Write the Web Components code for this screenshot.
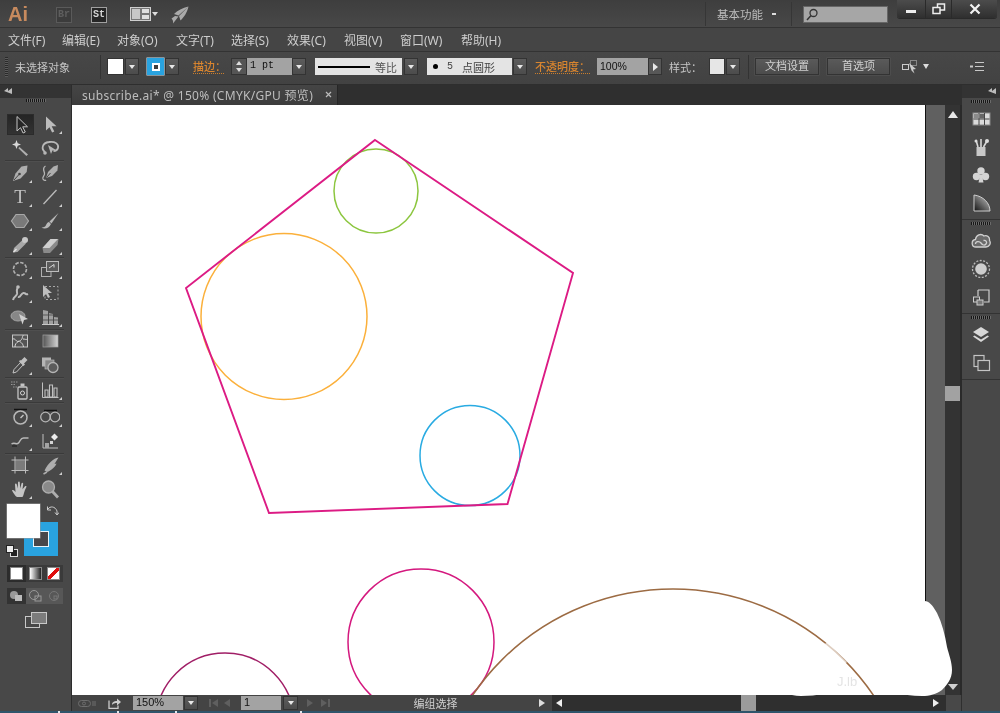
<!DOCTYPE html>
<html lang="zh">
<head>
<meta charset="utf-8">
<title>subscribe.ai</title>
<style>
  html, body { margin: 0; height: 713px; overflow: hidden; background: #444; }
  body {
    display: flex;
    flex-direction: column;
    font-family: "Noto Sans", "Noto Sans CJK SC", sans-serif;
    color: #c8c8c8;
    filter: blur(.45px);
  }
</style>
</head>
<body>
<ai-title-bar></ai-title-bar>
<ai-menu-bar></ai-menu-bar>
<ai-control-bar></ai-control-bar>
<ai-workspace>
  <ai-tool-panel></ai-tool-panel>
  <ai-document></ai-document>
  <ai-dock></ai-dock>
</ai-workspace>
<ai-bottom-strip></ai-bottom-strip>

<script>
// Shared base: every element renders its template into an open shadow root
class AiElement extends HTMLElement {
  constructor() {
    super();
    this.attachShadow({ mode: "open" });
    this.shadowRoot.innerHTML = this.template;
  }
}

const ICONS = {
  select: `<path d="M6 1.500v14.500l3.500-3.300 2.600 5.300 2.200-1-2.600-5.200h4.800z" fill="#262626" stroke="#c4c4c4"/>`,
  direct: `<path d="M6 2.500v14l3.500-3.300 2.600 5.300 2.200-1-2.600-5.200h4.800z" fill="#bcbcbc"/>`,
  wand: `<path d="M9.500 9l8.500 7.500-1.600 1.600L8.400 10.200z" fill="#b0b0b0"/><path d="M6.500 2l1.200 3.300 3.300 1.200-3.300 1.200-1.200 3.300-1.200-3.300L2 6.500l3.300-1.200z" fill="#d8d8d8"/>`,
  lasso: `<path d="M5 14C1 11 2 5 9 4c6-1 10 2 9 6-.6 2.500-3 3-4.500 3" fill="none" stroke="#b8b8b8" stroke-width="1.800"/><path d="M8 7l8 5-3.500.6L11 16z" fill="#b5b5b5"/><circle cx="5" cy="15" r="1.800" fill="#b5b5b5"/>`,
  pen: `<path d="M17.500 2.500l-.8 6.500-6.200 6.500L3 18l2.500-7.500 6-7z" fill="#aeaeae"/><path d="M4 17l5-5.500" stroke="#444"/><circle cx="9.500" cy="11" r="1.300" fill="#444"/>`,
  curve: `<path d="M18 2l-.6 5.500-5.400 5.500-6 2 2-6 5.500-5.500z" fill="#aeaeae"/><path d="M6.500 14.500l4-4.500" stroke="#444"/><path d="M5.500 3C2 5 4 8 4.500 10c.6 3-2.500 3.500-1.500 6 .5 1 2 2 3 1" fill="none" stroke="#b5b5b5" stroke-width="1.300"/>`,
  line: `<path d="M3.500 17L16.500 3" stroke="#bcbcbc" stroke-width="1.300"/>`,
  hexagon: `<path d="M6 3.500h8l4.500 6.500-4.500 6.500H6L1.500 10z" fill="#7a7a7a" stroke="#a8a8a8" stroke-width="1.200"/>`,
  brush: `<path d="M18.500 2L9.500 10.500l2 2z" fill="#b8b8b8"/><path d="M9 11c-2.500.5-2.500 3-4 4.500-1 .8-2.500 1-3.500 1.200 3 1.500 7.500 1 9.500-3.700z" fill="#b8b8b8"/>`,
  pencil: `<path d="M3 17.500l1-4.500 8.500-8 3.500 3.500-8.500 8.500z" fill="#a8a8a8"/><circle cx="15" cy="5" r="3" fill="#c8c8c8"/><path d="M3.500 17l3-3" stroke="#e4e4e4" stroke-width="1.500"/>`,
  eraser: `<path d="M2.500 13l8-9h8l-1 6-7.500 8H3.500z" fill="#8a8a8a"/><path d="M2.500 13h7l8.500-9h-7.500z" fill="#cfcfcf"/>`,
  rotate: `<circle cx="10" cy="10" r="6.500" fill="none" stroke="#b0b0b0" stroke-width="1.600" stroke-dasharray="3.500 1.500"/>`,
  scale: `<rect x="1.500" y="8.500" width="9.500" height="9" fill="none" stroke="#b0b0b0"/><rect x="6.500" y="2.500" width="12" height="10" fill="#5b5b5b" stroke="#bcbcbc"/><path d="M9 9l5-3.500M14 5.500v3" stroke="#d8d8d8"/>`,
  warp: `<path d="M3 17c1-4 3-3 4-6 .5-2-1-3 .5-6M8 14c3 1 3-5 6-4 2 .5 2 2 4 1" fill="none" stroke="#bcbcbc" stroke-width="2"/><circle cx="8" cy="4" r="1.800" fill="#bcbcbc"/>`,
  transform: `<rect x="5" y="3.500" width="13" height="13" fill="none" stroke="#a8a8a8" stroke-dasharray="2 2"/><path d="M3 2v12l3-3 2 4 2-1-2-4h4z" fill="#bebebe"/>`,
  builder: `<ellipse cx="8" cy="9" rx="7" ry="5" fill="#878787" stroke="#a4a4a4"/><path d="M9 7l9 5-4 1-1.500 4.500z" fill="#d0d0d0"/>`,
  perspective: `<path d="M3 3l5 1v13H3zM9 6l4 1v10H9zM14 10l4 .5V17h-4z" fill="#a0a0a0"/><path d="M2 17.500h17" stroke="#c8c8c8"/><path d="M3 8h15M3 13h15" stroke="#444" stroke-width=".8"/>`,
  mesh: `<rect x="2.500" y="4" width="15" height="12" fill="#555" stroke="#c4c4c4"/><path d="M2.500 8c4-1 3 4 7 2s2-4 4-6M9.500 10c1 2 3 1 4 6M5 16c0-3 1-4 4-6M13 8c2 0 3 1 4.500 0" fill="none" stroke="#d8d8d8"/>`,
  gradient: `<defs><linearGradient id="g"><stop offset="0" stop-color="#555"/><stop offset="1" stop-color="#d4d4d4"/></linearGradient></defs><rect x="3" y="4" width="15" height="12" fill="url(#g)" stroke="#a4a4a4" stroke-width=".7"/>`,
  dropper: `<path d="M3 18l1-3.500 7.500-8 2.500 2.500-7.500 8z" fill="none" stroke="#c4c4c4"/><path d="M11 5.500l3.500-3.500 3 3-3.500 3.500 1 1-1.500 1.500-4.500-4.500L10 5z" fill="#c0c0c0"/>`,
  blend: `<rect x="2" y="2.500" width="9" height="9" fill="#b5b5b5"/><rect x="5" y="5" width="9" height="9" fill="#868686" stroke="#b5b5b5" stroke-width=".7"/><circle cx="13" cy="12.500" r="5" fill="#5c5c5c" stroke="#b5b5b5" stroke-width="1.300"/>`,
  sprayer: `<rect x="8" y="7" width="9" height="12" rx="1" fill="none" stroke="#c4c4c4" stroke-width="1.300"/><rect x="10.500" y="3.500" width="4" height="3" fill="#c4c4c4"/><circle cx="12.500" cy="13" r="2" fill="none" stroke="#d4d4d4"/><path d="M1 2h7M1 4.500h5M3 7h4" stroke="#949494" stroke-dasharray="1.500 1"/>`,
  graph: `<path d="M2.500 2.500v15h16" fill="none" stroke="#c0c0c0"/><path d="M5 10h3v7H5zM9.500 5h3v12h-3zM14 8h3v9h-3z" fill="none" stroke="#c0c0c0" stroke-width="1.100"/>`,
  timer: `<path d="M4 2.500h13" stroke="#111" stroke-width="1.500"/><circle cx="10.500" cy="10.500" r="6.500" fill="none" stroke="#b8b8b8" stroke-width="1.500"/><path d="M10.500 11l3-3" stroke="#c4c4c4" stroke-width="1.500"/>`,
  glasses: `<path d="M4 3.500h13" stroke="#111" stroke-width="1.500"/><circle cx="5.500" cy="10" r="4.800" fill="none" stroke="#b5b5b5" stroke-width="1.300"/><circle cx="15" cy="10" r="4.800" fill="none" stroke="#b5b5b5" stroke-width="1.300"/>`,
  wave: `<path d="M1.500 13c3-2 5 1 7-1s2-6 6-5c2 .3 3 0 4 0" fill="none" stroke="#b8b8b8" stroke-width="1.500"/><path d="M2 15h5" stroke="#222" stroke-width="1.200"/>`,
  chart: `<path d="M3 3v14h15" fill="none" stroke="#c0c0c0"/><rect x="5" y="12" width="4" height="5" fill="#a4a4a4"/><rect x="10" y="10" width="3" height="3" fill="#d4d4d4"/><path d="M14.500 2.500l3.500 3.500-3.500 3.500L11 6z" fill="#ececec"/>`,
  artboard: `<rect x="5.500" y="5.500" width="9.500" height="9.500" fill="#7b7b7b"/><path d="M1.500 5h17M1.500 15.500h17M5 1.500v17M15.500 1.500v17" stroke="#bcbcbc"/>`,
  knife: `<path d="M18.500 2.500c-5 1-10 5-14 13l2.500 1.500c4-1 9-6 9.500-8.500l-2 .5z" fill="#aeaeae"/><path d="M7 17l-3.500 2" stroke="#aeaeae" stroke-width="1.500"/>`,
  hand: `<path d="M7 18c-2-1-3.500-4-5-6.500 1-1 2.200-.2 3.500 1.500L5 5.500c0-1.200 1.500-1.200 1.800 0l1 4L8 3.500c.2-1.200 1.700-1.200 1.800 0l.4 6L11.500 4.500c.4-1 1.700-.8 1.700.3l-.7 5.500 2.500-3c.8-.8 1.800-.1 1.400.8-1 2-2 4-2.400 6-.3 1.500-.8 2.900-1.500 3.900z" fill="#c4c4c4"/>`,
  zoom: `<circle cx="8.500" cy="8" r="6" fill="#8a8a8a" stroke="#aeaeae" stroke-width="1.300"/><path d="M12.500 12.500l5.500 6" stroke="#aeaeae" stroke-width="2.800"/>`,
  swatches: `<rect x="2" y="4" width="17" height="12" fill="#dadada" stroke="#888"/><path d="M2.500 10h16M8 4v12M13.500 4v12" stroke="#444"/><rect x="3" y="5" width="4.500" height="4.500" fill="#8a8a8a"/><rect x="8.500" y="5" width="4.500" height="4.500" fill="#666"/>`,
  brushes: `<rect x="5.500" y="10" width="9" height="9" fill="#c8c8c8"/><path d="M7 10L5 3M10 10V2M12.500 10l3.500-6" stroke="#d8d8d8" stroke-width="1.600"/><circle cx="16" cy="4" r="2" fill="#ddd"/><circle cx="5" cy="4" r="1.500" fill="#ddd"/>`,
  club: `<circle cx="10" cy="6" r="3.700" fill="#d4d4d4"/><circle cx="5.500" cy="11.500" r="3.700" fill="#d4d4d4"/><circle cx="14.500" cy="11.500" r="3.700" fill="#d4d4d4"/><path d="M9 10h2l1.500 7.500h-5z" fill="#d4d4d4"/>`,
  quarter: `<defs><linearGradient id="q" x1="0" y1="1" x2="1" y2="0"><stop offset="0" stop-color="#111"/><stop offset="1" stop-color="#ccc"/></linearGradient></defs><path d="M3 2v16h16C19 10 12 3 3 2z" fill="url(#q)" stroke="#ccc"/>`,
  cloud: `<path d="M5 16c-5 0-5-7-.5-7.500C5 4 10 2 13 5c3-1 6 1 5.500 4.500 2 3-.5 6.500-3.500 6.500z" fill="#6a6a6a" stroke="#d0d0d0" stroke-width="1.300"/><path d="M4.500 13c0-3 4-3 5.500-1s3.500 3 5 1 0-4-2.500-3.500" fill="none" stroke="#d0d0d0" stroke-width="1.300"/>`,
  sun: `<circle cx="10" cy="10" r="5.800" fill="#cdcdcd"/><circle cx="10" cy="10" r="8.500" fill="none" stroke="#bbb" stroke-width="1.300" stroke-dasharray="2 1.500"/>`,
  boards: `<path d="M7 3h11v12h-5" fill="none" stroke="#cfcfcf" stroke-width="1.200"/><path d="M7 3v6" stroke="#cfcfcf" stroke-width="1.200"/><rect x="2.500" y="10" width="6" height="5" fill="none" stroke="#cfcfcf"/><rect x="6" y="13" width="6" height="5" fill="#777" stroke="#cfcfcf"/>`,
  layers: `<path d="M10 2l8 5-8 5-8-5z" fill="#d8d8d8"/><path d="M3.500 10.500L10 14.500l6.500-4 1.500 1-8 5.500-8-5.500z" fill="#d8d8d8"/>`,
  overlap: `<rect x="3" y="2.500" width="10" height="11" fill="none" stroke="#c4c4c4" stroke-width="1.200"/><rect x="7" y="7.500" width="11.500" height="10" fill="#4a4a4a" stroke="#c4c4c4" stroke-width="1.200"/>`
};

// One svg icon looked up by name
class AiIcon extends AiElement {
  get template() {
    return `<style>:host { display: block; width: 20px; height: 20px; flex: none; } svg { display: block; }</style><svg width="20" height="20" viewBox="0 0 20 20"></svg>`;
  }
  connectedCallback() {
    this.shadowRoot.querySelector("svg").innerHTML = ICONS[this.getAttribute("name")] || "";
  }
}

// Tool button: icon, selected state and flyout corner
class AiTool extends AiElement {
  get template() {
    return `<style>
      :host { display: flex; position: relative; align-items: center; justify-content: center; height: 24px; }
      :host([selected]) { background: linear-gradient(#242424, #333); box-shadow: inset 0 0 0 1px #2b2b2b; margin: 2px 1px 1px 2px; }
      :host([flyout])::after {
        content: ""; position: absolute; right: 3px; bottom: 2px;
        border-left: 3px solid transparent; border-bottom: 3px solid #cfcfcf;
      }
      .t { font: 19px/20px "Liberation Serif", serif; color: #c0c0c0; }
    </style><slot></slot>`;
  }
  connectedCallback() {
    const name = this.getAttribute("icon");
    if (name) {
      const icon = document.createElement("ai-icon");
      icon.setAttribute("name", name);
      this.shadowRoot.appendChild(icon);
    } else {
      this.shadowRoot.innerHTML += `<span class="t">T</span>`;
    }
  }
}

// Small dropdown button with a white triangle
class AiDrop extends AiElement {
  get template() {
    return `<style>
      :host { display: flex; flex: none; align-items: center; justify-content: center; box-sizing: border-box;
        width: var(--w, 14px); height: 17px; background: linear-gradient(#5c5c5c, #4c4c4c); border: 1px solid #333; }
      i { border-left: 3px solid transparent; border-right: 3px solid transparent; border-top: 4px solid #e8e8e8; }
    </style><i></i>`;
  }
}

// Grey numeric field
class AiField extends AiElement {
  get template() {
    return `<style>
      :host { display: block; flex: none; box-sizing: border-box; height: 17px; padding: 0 3px;
        background: #a3a3a3; color: #111; font: 10.500px/16px "Liberation Sans", sans-serif; overflow: hidden; white-space: nowrap; }
    </style><slot></slot>`;
  }
}

class AiTitleBar extends AiElement {
  get template() {
    return `<style>
      :host { display: flex; flex: none; align-items: center; height: 28px; box-sizing: border-box;
        background: linear-gradient(#3e3e3e, #484848); border-bottom: 1px solid #333; position: relative; }
      .logo { margin-left: 8px; width: 22px; font: bold 20px/28px "Liberation Sans", sans-serif; color: #c78a5e; }
      .app { flex: none; box-sizing: border-box; width: 16px; height: 16px; margin-top: 2px; text-align: center;
        font: bold 10px/14px "Liberation Mono", monospace; }
      .br { margin-left: 26px; border: 1px solid #5a5a5a; color: #5e5e5e; background: #3c3c3c; }
      .st { margin-left: 19px; border: 1px solid #a0a0a0; color: #d5d5d5; background: #262626; }
      .layout { margin-left: 23px; flex: none; }
      .rocket { margin-left: 13px; flex: none; margin-top: 3px; }
      .div { flex: none; width: 1px; height: 24px; background: #363636; }
      .work { margin-left: 11px; font-size: 11.500px; color: #bdbdbd; width: 47px; white-space: nowrap; }
      .arrow { margin-left: 8px; width: 4px; height: 2px; background: #ddd; flex: none; }
      .search { flex: none; box-sizing: border-box; margin-left: 11px; width: 85px; height: 17px; background: #a6a6a6;
        border: 1px solid #666; display: flex; align-items: center; padding-left: 2px; margin-top: 1px; }
      .win { position: absolute; right: 3px; top: 0; width: 100px; height: 18px; display: flex;
        background: linear-gradient(#4c4c4c, #2f2f2f); border-radius: 0 0 3px 3px; box-shadow: 0 1px 0 #2a2a2a; }
      .win div { display: flex; align-items: center; justify-content: center; border-left: 1px solid #2a2a2a; }
    </style>
    <div class="logo">Ai</div>
    <div class="app br">Br</div>
    <div class="app st">St</div>
    <svg class="layout" width="28" height="16" viewBox="0 0 28 16">
      <rect x=".5" y="1.500" width="20" height="13" fill="#777" stroke="#cfcfcf"/>
      <rect x="2" y="3" width="8" height="10" fill="#c8c8c8"/><rect x="12" y="3" width="7" height="4" fill="#e0e0e0"/><rect x="12" y="9" width="7" height="4" fill="#e0e0e0"/>
      <path d="M22 6h6l-3 4z" fill="#ddd"/>
    </svg>
    <svg class="rocket" width="18" height="18" viewBox="0 0 18 18">
      <path d="M17.500.5C11.500 2 6.500 4.500 3 8l4.500 1.500zM17.500.5C16 7 13 11 9.500 14.500L8 10zM7.500 10.500l-5.500 7c.3-2 0-3.500-1.500-5l3.500-2.500z" fill="#aaa"/>
    </svg>
    <div class="div" style="margin-left:516px"></div>
    <div class="work">基本功能</div>
    <div class="arrow"></div>
    <div class="div" style="margin-left:15px"></div>
    <div class="search">
      <svg width="13" height="13" viewBox="0 0 13 13"><circle cx="7.500" cy="5" r="3.500" fill="none" stroke="#333" stroke-width="1.300"/><path d="M5 7.500L1 12" stroke="#333" stroke-width="1.500"/></svg>
    </div>
    <div class="win">
      <div style="width:28px;border-left:0"><svg width="12" height="10"><rect x="1" y="6" width="10" height="3" fill="#eee"/></svg></div>
      <div style="width:25px"><svg width="14" height="12" fill="none" stroke="#eee" stroke-width="1.500"><rect x="5.500" y="1" width="7" height="6"/><rect x="1" y="4.500" width="7" height="6" fill="#3c3c3c"/></svg></div>
      <div style="flex:1"><svg width="12" height="12" stroke="#f2f2f2" stroke-width="2.200"><path d="M1.500 1.500l9 9M10.500 1.500l-9 9"/></svg></div>
    </div>`;
  }
}

class AiMenuBar extends AiElement {
  get template() {
    const items = ["文件(F)", "编辑(E)", "对象(O)", "文字(T)", "选择(S)", "效果(C)", "视图(V)", "窗口(W)", "帮助(H)"];
    const left = [8, 62, 117, 176, 231, 287, 344, 400, 461];
    const widths = left.map((x, i) => (left[i + 1] || x + 50) - x);
    return `<style>
      :host { display: flex; flex: none; height: 24px; box-sizing: border-box; padding: 1px 0 0 8px; align-items: center;
        background: #454545; border-bottom: 1px solid #333; font-size: 12px; color: #cdcdcd; }
      span { flex: none; white-space: nowrap; }
    </style>${items.map((t, i) => `<span style="width:${widths[i]}px">${t}</span>`).join("")}`;
  }
}

class AiControlBar extends AiElement {
  get template() {
    return `<style>
      :host { display: flex; flex: none; height: 33px; box-sizing: border-box; padding: 0 0 3px; align-items: center;
        background: linear-gradient(#474747, #424242); border-bottom: 1px solid #2e2e2e; font-size: 11px; color: #c6c6c6; }
      :host > * { flex: none; }
      .grip { width: 3px; height: 20px; margin-left: 5px; background: repeating-linear-gradient(#2a2a2a 0 1px, #5a5a5a 1px 2px); }
      .div { width: 1px; height: 24px; background: #333; }
      .swatch { box-sizing: border-box; width: 17px; height: 17px; background: #fff; border: 1px solid #333; }
      .stroke { background: #29a3e0; display: flex; align-items: center; justify-content: center; border-color: #29a3e0; box-shadow: 0 0 0 .5px #cfe6f2; }
      .stroke i { box-sizing: border-box; width: 8px; height: 8px; border: 2px solid #fff; background: #3e3e3e; }
      .orange { color: #d9852f; font-weight: 500; border-bottom: 1px dotted #c97d2c; line-height: 13px; white-space: nowrap; }
      .stepper { box-sizing: border-box; width: 16px; height: 17px; background: #555; border: 1px solid #333; display: flex; flex-direction: column; align-items: center; justify-content: space-around; padding: 1px 0; }
      .stepper i { border-left: 3px solid transparent; border-right: 3px solid transparent; }
      .stepper i:first-child { border-bottom: 4px solid #ddd; }
      .stepper i:last-child { border-top: 4px solid #ddd; }
      .line { box-sizing: border-box; width: 87px; height: 17px; background: #e4e4e4; display: flex; align-items: center; color: #555; padding-left: 3px; white-space: nowrap; }
      .line b { width: 52px; height: 2px; background: #000; margin-right: 5px; }
      .brush { box-sizing: border-box; width: 85px; height: 17px; background: #e4e4e4; display: flex; align-items: center; color: #444; padding-left: 6px; white-space: nowrap; }
      .brush b { width: 5px; height: 5px; border-radius: 50%; background: #000; margin-right: 9px; }
      .brush span { margin-right: 9px; font: 10px "Liberation Mono", monospace; }
      .play { box-sizing: border-box; width: 14px; height: 17px; background: #575757; border: 1px solid #333; display: flex; align-items: center; justify-content: center; }
      .play i { border-top: 4px solid transparent; border-bottom: 4px solid transparent; border-left: 5px solid #e8e8e8; }
      .btn { box-sizing: border-box; height: 17px; text-align: center; line-height: 14px; background: linear-gradient(#5a5a5a, #4c4c4c); border: 1px solid #333; box-shadow: 0 0 0 .5px #565656; color: #d0d0d0; white-space: nowrap; }
      .tri { width: 0; border-left: 3.500px solid transparent; border-right: 3.500px solid transparent; border-top: 5px solid #ddd; }
    </style>
    <div class="grip"></div>
    <div style="margin-left:7px;width:58px;white-space:nowrap">未选择对象</div>
    <div class="div" style="margin-left:27px"></div>
    <div class="swatch" style="margin-left:6px"></div>
    <ai-drop style="margin-left:1px"></ai-drop>
    <div class="swatch stroke" style="margin-left:8px"><i></i></div>
    <ai-drop style="margin-left:1px"></ai-drop>
    <div class="orange" style="margin-left:14px;width:31px">描边：</div>
    <div class="stepper" style="margin-left:7px"><i></i><i></i></div>
    <ai-field style="width:45px;font-family:'Liberation Mono',monospace;font-size:10px">1 pt</ai-field>
    <ai-drop></ai-drop>
    <div class="line" style="margin-left:9px"><b></b>等比</div>
    <ai-drop style="margin-left:2px"></ai-drop>
    <div class="brush" style="margin-left:9px"><b></b><span>5</span>点圆形</div>
    <ai-drop style="margin-left:1px"></ai-drop>
    <div class="orange" style="margin-left:8px;width:55px">不透明度：</div>
    <ai-field style="margin-left:7px;width:51px">100%</ai-field>
    <div class="play"><i></i></div>
    <div style="margin-left:7px;width:33px;white-space:nowrap">样式：</div>
    <div class="swatch" style="margin-left:7px;width:16px;background:#e6e6e6"></div>
    <ai-drop style="margin-left:1px"></ai-drop>
    <div class="div" style="margin-left:8px"></div>
    <div class="btn" style="margin-left:6px;width:64px">文档设置</div>
    <div class="btn" style="margin-left:8px;width:63px">首选项</div>
    <svg style="margin-left:12px" width="16" height="16" viewBox="0 0 16 16"><rect x=".5" y="5.500" width="6" height="5" fill="none" stroke="#ccc"/><rect x="8.500" y="1.500" width="6" height="5" fill="none" stroke="#888"/><path d="M7 4l7 6-3 .5 1.500 4-3-3z" fill="#ccc"/></svg>
    <div class="tri" style="margin-left:5px"></div>
    <svg style="margin-left:40px" width="15" height="11" viewBox="0 0 15 11"><path d="M6 1.500h9M6 5.500h9M6 9.500h9" stroke="#c8c8c8"/><path d="M1 5.500h3" stroke="#c8c8c8" stroke-width="2"/></svg>`;
  }
}

class AiWorkspace extends AiElement {
  get template() {
    return `<style>:host { display: flex; flex: 1; min-height: 0; }</style><slot></slot>`;
  }
}

// Panel header with collapse arrows and a dotted grip
class AiPanelHead extends AiElement {
  get template() {
    return `<style>
      :host { display: block; height: 13px; background: #333; position: relative; }
      i { position: absolute; top: 3px; left: var(--arrows, 4px); width: 8px; height: 6px; background: #bbb;
        clip-path: polygon(0 50%, 50% 0, 50% 100%, 50% 50%, 100% 0, 100% 100%); }
    </style><i></i>`;
  }
}

class AiGrip extends AiElement {
  get template() {
    return `<style>
      :host { display: block; width: 20px; height: 3px; margin: 0 auto; flex: none;
        background: repeating-linear-gradient(90deg, #161616 0 1px, #6a6a6a 1px 2px); }
    </style>`;
  }
}

class AiToolPanel extends AiElement {
  get template() {
    const groups = [
      [["select", 0, 1], ["direct", 1], ["wand"], ["lasso"]],
      [["pen", 1], ["curve", 1], ["", 1], ["line", 1], ["hexagon", 1], ["brush", 1], ["pencil", 1], ["eraser", 1]],
      [["rotate", 1], ["scale", 1], ["warp", 1], ["transform"], ["builder", 1], ["perspective", 1]],
      [["mesh"], ["gradient"], ["dropper", 1], ["blend"]],
      [["sprayer", 1], ["graph", 1]],
      [["timer", 1], ["glasses", 1], ["wave", 1], ["chart"]],
      [["artboard"], ["knife", 1], ["hand", 1], ["zoom"]]
    ];
    const toolHtml = ([icon, fly, sel]) =>
      `<ai-tool ${icon ? `icon="${icon}"` : ""} ${fly ? "flyout" : ""} ${sel ? "selected" : ""}></ai-tool>`;
    return `<style>
      :host { display: flex; flex-direction: column; flex: none; width: 72px; box-sizing: border-box;
        background: #484848; border-right: 1px solid #2c2c2c; }
      ai-grip { margin-top: 1px; }
      .tools { margin: 10px 7px 0 5px; }
      .group { display: grid; grid-template-columns: 30px 30px; grid-auto-rows: 24px; border-bottom: 1px solid #3a3a3a; box-shadow: 0 1px 0 #4f4f4f; margin-bottom: -1px; }
      .group:last-child { border: 0; box-shadow: none; margin-bottom: 0; }
      .g0 { margin-bottom: 0; }
      .g4 { padding-top: 1px; margin-bottom: 2px; }
      ai-tool[selected] { height: auto; }
      .modes { display: flex; margin: 7px 8px 0 7px; height: 17px; background: #3a3a3a; }
      .modes div { flex: 1; display: flex; align-items: center; justify-content: center; }
      .modes .on { background: #2c2c2c; }
      .modes b { display: block; width: 13px; height: 13px; box-sizing: border-box; border: 1px solid #888; }
      .white { background: #fff; } .grad { background: linear-gradient(90deg, #fff, #222); }
      .none { background: linear-gradient(135deg, #fff 0 38%, #e01010 38% 62%, #fff 62%); }
      .modes.draw { margin-top: 6px; height: 16px; background: #575757; }
      .draw .on { background: #333; }
      .screen { display: flex; justify-content: center; margin-top: 8px; }
    </style>
    <ai-panel-head></ai-panel-head>
    <ai-grip></ai-grip>
    <div class="tools">
      ${groups.map((g, i) => `<div class="group g${i}">${g.map(toolHtml).join("")}</div>`).join("")}
    </div>
    <ai-color-well></ai-color-well>
    <div class="modes">
      <div class="on"><b class="white"></b></div><div><b class="grad"></b></div><div><b class="none"></b></div>
    </div>
    <div class="modes draw">
      <div class="on"><svg width="14" height="12"><circle cx="5" cy="5" r="4" fill="#999"/><rect x="6" y="5" width="7" height="6" fill="#bbb"/></svg></div>
      <div><svg width="14" height="12" fill="none" stroke="#999"><circle cx="6" cy="5" r="4.500"/><rect x="7" y="6" width="6" height="5"/></svg></div>
      <div><svg width="14" height="12" fill="none" stroke="#777"><circle cx="7" cy="6" r="4.500"/><rect x="7" y="6" width="3" height="3"/></svg></div>
    </div>
    <div class="screen">
      <svg width="22" height="16" viewBox="0 0 22 16"><rect x=".5" y="4.500" width="14" height="11" fill="none" stroke="#c8c8c8"/><rect x="6.500" y=".5" width="15" height="11" fill="#7c7c7c" stroke="#c8c8c8"/></svg>
    </div>`;
  }
}

// Fill and stroke squares overlap, so these two are placed over each other
class AiColorWell extends AiElement {
  get template() {
    return `<style>
      :host { display: block; position: relative; height: 54px; margin-top: 3px; flex: none; }
      .fill { position: absolute; left: 7px; top: 0; width: 33px; height: 34px; background: #fff; box-shadow: 0 0 0 .5px #999; }
      .stroke { position: absolute; left: 24px; top: 18px; box-sizing: border-box; width: 34px; height: 34px;
        background: #48474a; border: 9px solid #29a3e0; }
      .stroke::after { content: ""; position: absolute; inset: 0; border: 1px solid #e8f4fa; }
      .swap { position: absolute; left: 47px; top: 1px; }
      .def { position: absolute; left: 6px; top: 41px; }
    </style>
    <div class="stroke"></div>
    <div class="fill"></div>
    <svg class="swap" width="12" height="12" viewBox="0 0 12 12" fill="none" stroke="#ccc"><path d="M1 4c2-3 7-3 9 2v3"/><path d="M.5 1.500V5h3.500M8 7.500l2 2.500 2-2.500"/></svg>
    <svg class="def" width="12" height="12"><rect x="4.500" y="4.500" width="7" height="7" fill="#222" stroke="#ddd"/><rect x=".5" y=".5" width="7" height="7" fill="#eee" stroke="#222"/></svg>`;
  }
}

class AiTab extends AiElement {
  get template() {
    return `<style>
      :host { display: flex; flex: none; height: 20px; background: #2f2f2f; }
      .tab { display: flex; align-items: center; box-sizing: border-box; width: 266px; padding: 0 5px 1px 10px;
        background: linear-gradient(#454545, #3c3c3c); border-right: 1px solid #262626; color: #bdbdbd;
        font-size: 12px; letter-spacing: .3px; white-space: nowrap; }
      .tab span { flex: 1; }
      svg { flex: none; }
    </style>
    <div class="tab"><span>subscribe.ai* @ 150% (CMYK/GPU 预览)</span>
      <svg width="7" height="7" stroke="#bbb" stroke-width="1.200"><path d="M1 1l5 5M6 1L1 6"/></svg>
    </div>`;
  }
}

// The artboard: shapes are free-canvas items, drawn in page coordinates
class AiCanvas extends AiElement {
  get template() {
    return `<style>
      :host { display: block; flex: 1; position: relative; z-index: 1; background: #606060; min-width: 0; }
      .page { position: absolute; left: 0; top: 0; width: 853px; height: 590px; background: #fff; border-right: 1px solid #111; }
      svg { position: absolute; left: 0; top: 0; overflow: visible; }
      text { font: 13px "Liberation Sans", sans-serif; }
    </style>
    <div class="page"></div>
    <svg width="853" height="590" viewBox="72 105 853 590" fill="none" stroke-width="1.500">
      <defs><clipPath id="c"><rect x="72" y="105" width="853" height="590"/></clipPath></defs>
      <path d="M925 601c6 1 9 7 12 12 5 10 8 22 10 34 2 8 5 15 5 23 0 9-5 15-10 20-6 4-12 6-20 6-10 0-19-2-29-2H823c-6 1-14 2-22 2-6 0-12-2-18-2H740V601z" fill="#fff" stroke="none"/>
      <g clip-path="url(#c)">
        <circle cx="225" cy="722" r="69" stroke="#a01e66"/>
        <circle cx="421" cy="642" r="73" stroke="#d4187e"/>
        <circle cx="673" cy="831" r="242" stroke="#9c6b43"/>
      </g>
      <path d="M826 643L846 663" stroke="#fff" stroke-width="3" opacity=".65"/>
      <text x="837" y="686" fill="#e4e4e4" stroke="none">J.lb</text>
      <circle cx="376" cy="191" r="42" stroke="#8cc63f"/>
      <circle cx="284" cy="316.500" r="83" stroke="#fbb03b"/>
      <circle cx="470" cy="455.500" r="50" stroke="#29abe2"/>
      <path d="M375 140L573 273 507.500 504 269 513 186 288z" stroke="#dc1b84" stroke-width="1.900"/>
    </svg>`;
  }
}

class AiVScroll extends AiElement {
  get template() {
    return `<style>
      :host { display: flex; flex-direction: column; align-items: center; flex: none; box-sizing: border-box; width: 17px;
        background: #333; border-right: 2px solid #2a2a2a; padding: 6px 0 5px; }
      .up { border-left: 5px solid transparent; border-right: 5px solid transparent; border-bottom: 7px solid #e8e8e8; }
      .down { border-left: 5px solid transparent; border-right: 5px solid transparent; border-top: 6px solid #d0d0d0; margin-top: auto; }
      .thumb { width: 15px; height: 15px; background: #a2a2a2; margin-top: 268px; }
    </style><div class="up"></div><div class="thumb"></div><div class="down"></div>`;
  }
}

class AiStatusBar extends AiElement {
  get template() {
    return `<style>
      :host { display: flex; flex: none; height: 16px; align-items: center; background: #444; font-size: 11px; color: #cfcfcf; }
      :host > * { flex: none; }
      ai-field { height: 14px; line-height: 13px; font-size: 11px; }
      ai-drop { height: 14px; --w: 14px; }
      i { display: block; border-top: 4px solid transparent; border-bottom: 4px solid transparent; }
      .lf { border-right: 6px solid #5f5f5f; } .rt { border-left: 6px solid #5f5f5f; }
      .bar { width: 2px; height: 8px; background: #5f5f5f; }
      .label { width: 203px; text-align: center; white-space: nowrap; }
      .hs { flex: 1; align-self: stretch; display: flex; align-items: center; background: #2f2f2f; }
      .thumb { width: 15px; height: 16px; background: #9b9b9b; margin-left: 179px; }
      .corner { width: 15px; height: 16px; margin-left: 7px; background: #484848; }
    </style>
    <svg style="margin-left:6px" width="19" height="11" viewBox="0 0 19 11" fill="none" stroke="#6e6e6e"><rect x=".5" y="2.500" width="12" height="6" rx="3"/><circle cx="6" cy="5.500" r="1.500"/><path d="M15 3v5M17 3v5"/></svg>
    <svg style="margin-left:11px" width="13" height="12" viewBox="0 0 13 12" fill="none" stroke="#ccc"><path d="M1 3.500v8h9v-3" stroke-width="1.300"/><path d="M4 8c0-3 2-4 5-4V1.500l4 3.500-4 3.500V6C7 6 5 6.500 4 8z" fill="#ccc" stroke="none"/></svg>
    <ai-field style="margin-left:12px;width:50px">150%</ai-field>
    <ai-drop style="margin-left:1px"></ai-drop>
    <div class="bar" style="margin-left:11px"></div><i class="lf" style="margin-left:1px"></i>
    <i class="lf" style="margin-left:6px"></i>
    <ai-field style="margin-left:11px;width:40px">1</ai-field>
    <ai-drop style="margin-left:2px;--w:15px"></ai-drop>
    <i class="rt" style="margin-left:9px"></i>
    <i class="rt" style="margin-left:8px"></i><div class="bar" style="margin-left:1px"></div>
    <div class="label" style="margin-left:4px">编组选择</div>
    <i style="margin-left:2px;border-left:6px solid #ddd"></i>
    <div class="hs" style="margin-left:7px">
      <i style="margin-left:4px;border-right:6px solid #eee"></i>
      <div class="thumb"></div>
      <i style="margin-left:177px;border-left:6px solid #eee"></i>
      <div class="corner"></div>
    </div>`;
  }
}

class AiDocument extends AiElement {
  get template() {
    return `<style>
      :host { display: flex; flex-direction: column; flex: 1; min-width: 0; }
      .row { display: flex; flex: 1; min-height: 0; }
    </style>
    <ai-tab></ai-tab>
    <div class="row"><ai-canvas></ai-canvas><ai-v-scroll></ai-v-scroll></div>
    <ai-status-bar></ai-status-bar>`;
  }
}

class AiDock extends AiElement {
  get template() {
    const groups = [
      ["swatches", "brushes", "club", "quarter"],
      ["cloud", "sun", "boards"],
      ["layers", "overlap"]
    ];
    return `<style>
      :host { display: flex; flex-direction: column; flex: none; width: 38px; box-sizing: border-box; background: #484848; --arrows: 26px; }
      .group { display: flex; flex-direction: column; align-items: center; border-bottom: 1px solid #333; padding: 2px 0 0; }
      .list { display: flex; flex-direction: column; gap: 8px; margin-top: 6px; padding-bottom: 6px; }
    </style>
    <ai-panel-head></ai-panel-head>
    ${groups.map(g => `<div class="group"><ai-grip></ai-grip><div class="list">${g.map(n => `<ai-icon name="${n}"></ai-icon>`).join("")}</div></div>`).join("")}`;
  }
}

class AiBottomStrip extends AiElement {
  get template() {
    return `<style>
      :host { display: block; flex: none; height: 2px;
        background: linear-gradient(90deg, #2f556b 0 58px, #dfe8ee 58px 60px, #2f556b 60px 117px, #dfe8ee 117px 119px, #2f556b 119px 175px, #dfe8ee 175px 177px, #2f556b 177px 300px, #dfe8ee 300px 302px, #2f556b 302px); }
    </style>`;
  }
}

customElements.define("ai-icon", AiIcon);
customElements.define("ai-tool", AiTool);
customElements.define("ai-drop", AiDrop);
customElements.define("ai-field", AiField);
customElements.define("ai-title-bar", AiTitleBar);
customElements.define("ai-menu-bar", AiMenuBar);
customElements.define("ai-control-bar", AiControlBar);
customElements.define("ai-workspace", AiWorkspace);
customElements.define("ai-panel-head", AiPanelHead);
customElements.define("ai-grip", AiGrip);
customElements.define("ai-tool-panel", AiToolPanel);
customElements.define("ai-color-well", AiColorWell);
customElements.define("ai-tab", AiTab);
customElements.define("ai-canvas", AiCanvas);
customElements.define("ai-v-scroll", AiVScroll);
customElements.define("ai-status-bar", AiStatusBar);
customElements.define("ai-document", AiDocument);
customElements.define("ai-dock", AiDock);
customElements.define("ai-bottom-strip", AiBottomStrip);
</script>
</body>
</html>
